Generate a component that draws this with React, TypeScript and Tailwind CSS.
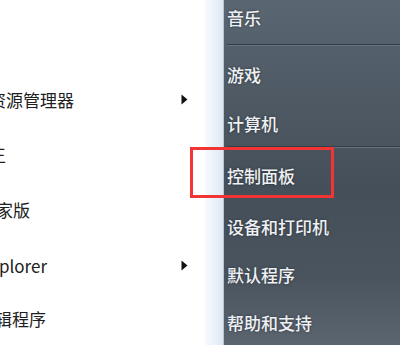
import React from "react";

const font = { fontFamily: '"Noto Sans CJK SC", "Noto Sans", sans-serif' };

function Arrow() {
  return (
    <svg width="7" height="11" viewBox="0 0 7 11" className="mr-[17px] shrink-0">
      <path d="M0.5 0.5 L6.5 5.5 L0.5 10.5 Z" fill="#111" />
    </svg>
  );
}

function LeftRow({ h, text, ml, arrow }: { h: string; text: string; ml: string; arrow?: boolean }) {
  return (
    <div className={`flex items-center ${h}`}>
      <span className={`whitespace-nowrap text-[17px] leading-[24px] text-[#202020] ${ml}`}>{text}</span>
      <div className="flex-1" />
      {arrow && <Arrow />}
    </div>
  );
}

function Sep() {
  return (
    <div className="ml-[3px] flex flex-col">
      <div className="h-px bg-[#363f48]" />
      <div className="h-px bg-[#66717c]" />
    </div>
  );
}

function RightRow({ h, text, extra }: { h: string; text: string; extra?: string }) {
  return (
    <div className={`flex items-center pl-[3px] ${h} ${extra ?? ""}`}>
      <span className="whitespace-nowrap text-[17px] leading-[24px] font-medium text-[#eef1f4] [text-shadow:0_0_3px_rgba(0,0,0,0.45)]">
        {text}
      </span>
    </div>
  );
}

export default function App() {
  return (
    <div className="relative flex h-[345px] w-[400px] overflow-hidden bg-white" style={font}>
      {/* left white panel */}
      <div className="flex w-[205px] shrink-0 flex-col overflow-hidden bg-white pt-[72px]">
        <LeftRow h="h-[56px]" text="资源管理器" ml="ml-[-11px]" arrow />
        <LeftRow h="h-[55px]" text="王" ml="ml-[-11px]" />
        <LeftRow h="h-[56px]" text="家版" ml="ml-[-4px]" />
        <LeftRow h="h-[56px]" text="Explorer" ml="ml-[-19px]" arrow />
        <LeftRow h="h-[52px]" text="辑程序" ml="ml-[-5px]" />
      </div>
      {/* light blue strip */}
      <div className="w-[18px] shrink-0 bg-[linear-gradient(90deg,#f7fafd_0%,#e9f0f8_60%,#dde6f1_100%)]" />
      <div className="w-px shrink-0 bg-[#b9c4d0]" />
      {/* dark panel */}
      <div className="flex flex-1 flex-col bg-[linear-gradient(180deg,#5a6672_0%,#4e5964_30%,#454f59_55%,#4a545f_80%,#5b6570_100%)]">
        <RightRow h="h-[45px]" extra="pb-[7px]" text="音乐" />
        <Sep />
        <RightRow h="h-[53px]" extra="pt-[8px]" text="游戏" />
        <RightRow h="h-[51px]" extra="pt-[5px]" text="计算机" />
        <Sep />
        <RightRow h="h-[51px]" extra="pt-[5px]" text="控制面板" />
        <RightRow h="h-[52px]" extra="pt-[7px]" text="设备和打印机" />
        <RightRow h="h-[50px]" extra="pt-[5px]" text="默认程序" />
        <RightRow h="h-[50px]" extra="pt-[5px]" text="帮助和支持" />
      </div>
      {/* red highlight box */}
      <div className="absolute left-[190px] top-[147px] h-[51px] w-[144px] border-[3px] border-[#f23434]" />
    </div>
  );
}
